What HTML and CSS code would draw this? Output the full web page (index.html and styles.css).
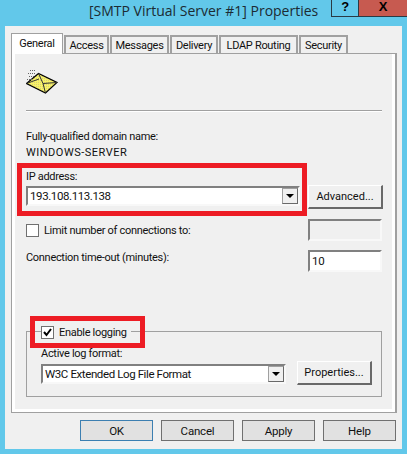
FILE: index.html
```html
<!DOCTYPE html>
<html lang="en">
<head>
    <meta charset="UTF-8">
    <title>[SMTP Virtual Server #1] Properties</title>
    <link rel="stylesheet" href="styles.css">
</head>
<body>
    <div class="window">
        <div class="titlebar">
            <div class="title">[SMTP Virtual Server #1] Properties</div>
            <div class="caption-btns">
                <div class="help-btn">?</div>
                <div class="close-btn">X</div>
            </div>
        </div>

        <div class="dialog">
            <div class="tabs">
                <div class="tab active">General</div>
                <div class="tab tab-access">Access</div>
                <div class="tab tab-messages">Messages</div>
                <div class="tab tab-delivery">Delivery</div>
                <div class="tab tab-ldap">LDAP Routing</div>
                <div class="tab tab-security">Security</div>
            </div>

            <div class="panel">
                <div class="panel-inner">
                    <svg class="mail-icon" width="33" height="27" viewBox="0 0 33 27">
                        <defs>
                            <pattern id="dither" width="2" height="2" patternUnits="userSpaceOnUse">
                                <rect width="2" height="2" fill="#f8f266"/>
                                <rect width="1" height="1" fill="#d6d07a"/>
                            </pattern>
                        </defs>
                        <path d="M0.5 15.5 L12.5 5.5 L31 14.5 L19.5 25 Z" fill="url(#dither)" stroke="#000" stroke-width="1.2"/>
                        <path d="M12.5 5.5 L17 15.5 L31 14.5 M0.5 15.5 L13 11 M17 15.5 L19.5 25" fill="none" stroke="#333" stroke-width="1"/>
                        <path d="M4 2.5 H9 M2 5.5 H9 M3 8.5 H8 M1 11.5 H6" fill="none" stroke="#666" stroke-width="1" stroke-dasharray="1 1"/>
                    </svg>
                    <div class="separator"></div>

                    <div class="label">Fully-qualified domain name:</div>
                    <div class="label fqdn-value">WINDOWS-SERVER</div>

                    <div class="ip-row">
                        <div class="ip-field">
                            <div class="label">IP address:</div>
                            <div class="combo ip-combo">
                                <span class="combo-text">193.108.113.138</span>
                                <span class="combo-arrow"></span>
                            </div>
                            <div class="highlight ip-highlight"></div>
                        </div>
                        <div class="btn advanced-btn">Advanced...</div>
                    </div>

                    <div class="limit-row">
                        <div class="check-label">
                            <span class="checkbox"></span>
                            <span class="label">Limit number of connections to:</span>
                        </div>
                        <div class="input input-disabled"></div>
                    </div>

                    <div class="timeout-row">
                        <div class="label">Connection time-out (minutes):</div>
                        <div class="input">10</div>
                    </div>

                    <div class="group">
                        <div class="legend">
                            <span class="checkbox">
                                <svg width="11" height="11" viewBox="0 0 11 11">
                                    <path d="M2 5 L4.5 8 L9 2" fill="none" stroke="#000" stroke-width="2"/>
                                </svg>
                            </span>
                            <span class="label">Enable logging</span>
                        </div>
                        <div class="highlight log-highlight"></div>
                        <div class="label">Active log format:</div>
                        <div class="format-row">
                            <div class="combo log-combo">
                                <span class="combo-text">W3C Extended Log File Format</span>
                                <span class="combo-arrow"></span>
                            </div>
                            <div class="btn props-btn">Properties...</div>
                        </div>
                    </div>
                </div>
            </div>

            <div class="footer">
                <div class="btn footer-btn default-btn">OK</div>
                <div class="btn footer-btn">Cancel</div>
                <div class="btn footer-btn">Apply</div>
                <div class="btn footer-btn">Help</div>
            </div>
        </div>
    </div>
</body>
</html>
```

FILE: styles.css
```css
* {
    margin: 0;
    padding: 0;
    box-sizing: border-box;
}

body {
    font-family: Roboto, "Liberation Sans", sans-serif;
    font-size: 11px;
    letter-spacing: -0.3px;
    color: #111;
    background: #62c8ea;
    overflow: hidden;
}

.window {
    width: 407px;
    height: 454px;
    display: flex;
    flex-direction: column;
    background: #62c8ea;
}

.titlebar {
    height: 26px;
    flex: none;
    display: flex;
    justify-content: space-between;
    padding-left: 89px;
}

.title {
    font-family: "Open Sans", sans-serif;
    font-size: 14px;
    letter-spacing: 0;
    line-height: 22px;
    white-space: nowrap;
    color: #1c2b33;
}

.caption-btns {
    display: flex;
    flex: none;
    height: 17px;
    border: 1px solid #2a3a44;
    border-top: none;
    border-right: none;
    font-family: "Liberation Sans", sans-serif;
    font-weight: bold;
    line-height: 14px;
    font-size: 13px;
    text-align: center;
    color: #000;
}

.help-btn {
    width: 27px;
    border-right: 1px solid #2a3a44;
}

.close-btn {
    width: 48px;
    background: #c75a50;
}

.dialog {
    flex: 1;
    margin: 0 5px 5px;
    background: #f0f0f0;
    padding: 7px 5px 0 6px;
    display: flex;
    flex-direction: column;
}

.tabs {
    display: flex;
    height: 20px;
    align-items: flex-end;
    position: relative;
    z-index: 1;
}

.tab {
    height: 18px;
    margin-right: 1px;
    border: 2px solid #a0a0a0;
    border-bottom: none;
    background: #f0f0f0;
    text-align: center;
    line-height: 18px;
    white-space: nowrap;
}

.tab.active {
    width: 52px;
    height: 21px;
    margin-bottom: -1px;
    border: 1px solid #a0a0a0;
    border-bottom: none;
    background: #fff;
    line-height: 19px;
}

.tab-access { width: 45px; }
.tab-messages { width: 59px; }
.tab-delivery { width: 48px; }
.tab-ldap { width: 79px; }
.tab-security { width: 49px; }

.panel {
    height: 360px;
    border: 1px solid #a0a0a0;
    border-width: 1px 2px 1px 1px;
    background: #fff;
    padding: 0 3px 3px;
}

.panel-inner {
    height: 100%;
    background: #f0f0f0;
    padding: 14px 10px 0 11px;
}

.mail-icon {
    display: block;
    margin-bottom: 15px;
}

.separator {
    height: 2px;
    width: 356px;
    background: #a0a0a0;
    border-bottom: 1px solid #fff;
    margin-bottom: 17px;
}

.label {
    height: 14px;
    line-height: 16px;
    white-space: nowrap;
}

.fqdn-value {
    margin-top: 2px;
    letter-spacing: 0.5px;
}

.ip-row {
    display: flex;
    justify-content: space-between;
    margin-top: 10px;
    width: 357px;
}

.ip-field {
    position: relative;
    width: 274px;
}

.combo {
    display: flex;
    justify-content: space-between;
    align-items: center;
    height: 20px;
    margin-top: 3px;
    border: 2px solid #808080;
    border-right-color: #f8f8f8;
    border-bottom-color: #f8f8f8;
    background: #fff;
    padding-left: 2px;
    font-size: 11.5px;
    letter-spacing: -0.4px;
}

.combo-arrow {
    width: 16px;
    height: 16px;
    background: #f0f0f0;
    border: 1px solid #a0a0a0;
    border-right-color: #696969;
    border-bottom-color: #696969;
    position: relative;
}

.combo-arrow::after {
    content: "";
    position: absolute;
    left: 3px;
    top: 5px;
    border: 4px solid transparent;
    border-top: 4px solid #000;
    border-bottom: none;
}

.highlight {
    position: absolute;
    border: 5px solid #ed1c24;
}

.ip-highlight {
    left: -9px;
    top: -6px;
    width: 290px;
    height: 53px;
}

.btn {
    border: 1px solid #fff;
    border-right: 2px solid #696969;
    border-bottom: 2px solid #696969;
    background: #f0f0f0;
    text-align: center;
    line-height: 22px;
    letter-spacing: 0;
}

.advanced-btn {
    width: 75px;
    height: 24px;
    margin-top: 16px;
}

.limit-row,
.timeout-row {
    display: flex;
    justify-content: space-between;
    width: 356px;
}

.limit-row {
    margin-top: 10px;
    align-items: center;
}

.timeout-row {
    margin-top: 9px;
}

.check-label {
    display: flex;
    align-items: center;
    gap: 5px;
}

.checkbox {
    width: 13px;
    height: 13px;
    flex: none;
    display: block;
    border: 1px solid #707070;
    background: #fff;
}

.checkbox svg {
    display: block;
}

.input {
    width: 74px;
    height: 22px;
    border: 2px solid #808080;
    border-right-color: #f8f8f8;
    border-bottom-color: #f8f8f8;
    background: #fff;
    padding-left: 2px;
    line-height: 18px;
    font-size: 11.5px;
}

.input-disabled {
    background: #f0f0f0;
}

.group {
    position: relative;
    width: 356px;
    height: 66px;
    margin-top: 59px;
    border: 1px solid #a0a0a0;
    padding: 14px 14px 0;
}

.legend {
    position: absolute;
    left: 14px;
    top: -7px;
    display: flex;
    align-items: center;
    gap: 5px;
    padding-right: 4px;
    background: #f0f0f0;
}

.log-highlight {
    left: 3px;
    top: -16px;
    width: 115px;
    height: 32px;
}

.format-row {
    display: flex;
    justify-content: space-between;
    align-items: center;
    width: 331px;
    margin-top: 1px;
}

.log-combo {
    width: 245px;
    margin-top: 2px;
}

.props-btn {
    width: 75px;
    height: 24px;
}

.footer {
    display: flex;
    justify-content: flex-end;
    gap: 8px;
    margin-top: 7px;
    padding-right: 1px;
}

.footer-btn {
    width: 73px;
    height: 21px;
    border: 1px solid #707070;
    background: #e1e1e1;
    line-height: 20px;
    font-size: 11.5px;
    letter-spacing: -0.2px;
}

.default-btn {
    border: 1px solid #3c7fb1;
}
```
